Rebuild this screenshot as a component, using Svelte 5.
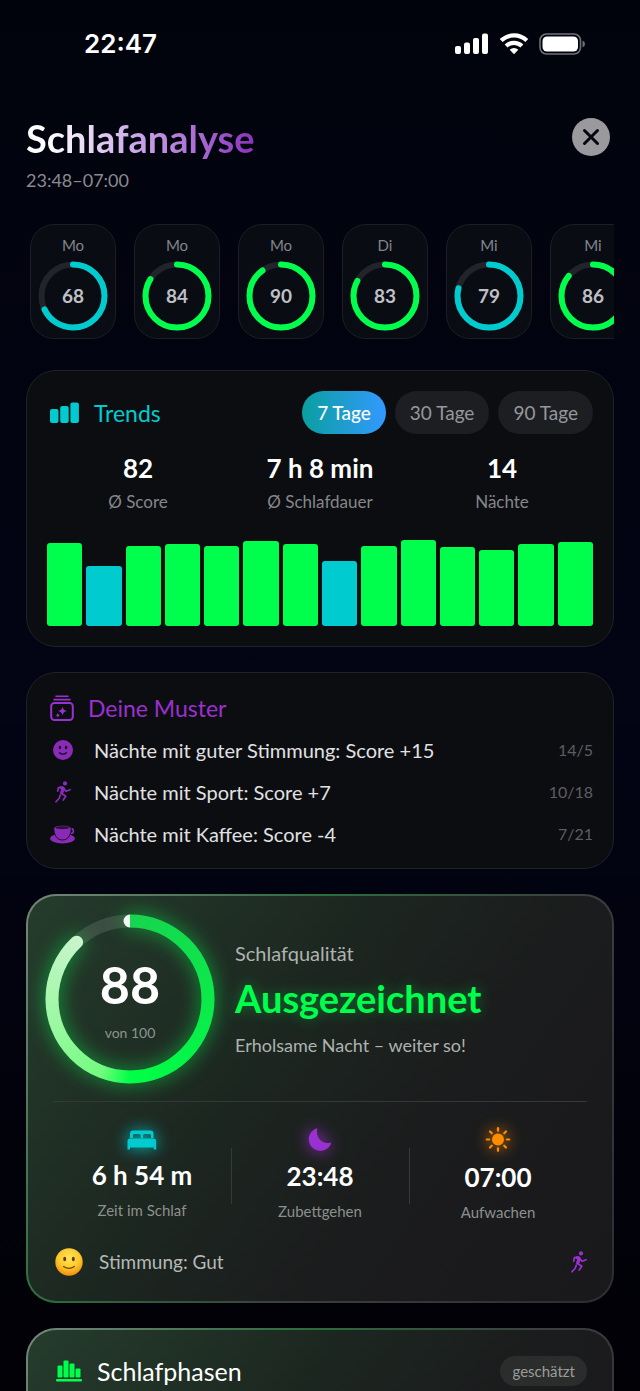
<script lang="ts">
    type Night = { day: string, score: number };

    const nights: Night[] = [
        { day: 'Mo', score: 68 },
        { day: 'Mo', score: 84 },
        { day: 'Mo', score: 90 },
        { day: 'Di', score: 83 },
        { day: 'Mi', score: 79 },
        { day: 'Mi', score: 86 },
    ];
    const ranges = [7, 30, 90];
    const trend = [83, 60, 80, 82, 80, 85, 82, 65, 80, 86, 79, 76, 82, 84];
    const patterns = [
        { icon: 'smile', text: 'Nächte mit guter Stimmung: Score +15', count: '14/5' },
        { icon: 'run', text: 'Nächte mit Sport: Score +7', count: '10/18' },
        { icon: 'cup', text: 'Nächte mit Kaffee: Score -4', count: '7/21' },
    ];

    let range = 7;
</script>

{#snippet runner()}
    <svg class="runner" viewBox="0 0 16 22" aria-hidden="true">
        <circle cx="10" cy="2.4" r="2.1" fill="currentColor" />
        <g fill="none" stroke="currentColor" stroke-width="1.7" stroke-linecap="round" stroke-linejoin="round">
            <path d="M2.7 10.2 3.4 6.6 7.6 6.2" />
            <path d="M8.6 7.6 11 10.2 15.1 8.7" />
            <path d="M6.3 12.2 10.8 15.2 8.2 19" />
            <path d="M5.3 14 4.2 17.2 1 20.8" />
        </g>
        <path d="M6.2 6.8 8.2 7.2 6.7 11.9" fill="none" stroke="currentColor" stroke-width="3.2" stroke-linejoin="round" stroke-linecap="round" />
    </svg>
{/snippet}

<div class="screen">
    <div class="statusbar">
        <time>22:47</time>
        <div class="status-icons">
            <svg width="34" height="22" viewBox="0 0 34 22" fill="#fff" aria-hidden="true">
                <rect x="0" y="13" width="6" height="8" rx="2" />
                <rect x="9" y="9.5" width="6" height="11.5" rx="2" />
                <rect x="18" y="5" width="6" height="16" rx="2" />
                <rect x="27" y="0.5" width="6" height="20.5" rx="2" />
            </svg>
            <svg width="30" height="22" viewBox="0 0 30 22" fill="none" stroke="#fff" stroke-width="4.2" aria-hidden="true">
                <path d="M2.2 7.6A18.5 18.5 0 0 1 27.800 7.600" />
                <path d="M7.100 13A11.500 11.500 0 0 1 22.900 13" />
                <path d="M15 21.200 10.700 16.700A6.200 6.200 0 0 1 19.300 16.700Z" fill="#fff" stroke="none" />
            </svg>
            <svg width="47" height="22" viewBox="0 0 47 22" aria-hidden="true">
                <rect x="1" y="1" width="40.5" height="20" rx="6.5" fill="none" stroke="#6f7077" stroke-width="1.6" />
                <rect x="3.5" y="3.5" width="35.5" height="15" rx="4.5" fill="#fff" />
                <path d="M43.500 7.500q2.500.8 2.500 3.500t-2.500 3.500z" fill="#6f7077" />
            </svg>
        </div>
    </div>

    <header>
        <div>
            <h1>Schlafanalyse</h1>
            <p>23:48–07:00</p>
        </div>
        <button class="close" aria-label="Schließen">
            <svg width="20" height="20" viewBox="0 0 20 20" aria-hidden="true">
                <path d="M3.500 3.500 16.500 16.500M16.500 3.500 3.500 16.500" stroke="#05060f" stroke-width="3" stroke-linecap="round" />
            </svg>
        </button>
    </header>

    <main>
        <div class="nights">
            {#each nights as night}
                <button class="night" class:good={night.score >= 80}>
                    <span>{night.day}</span>
                    <span class="ring">
                        <svg viewBox="0 0 70 70" aria-hidden="true">
                            <circle class="track" cx="35" cy="35" r="31.5" />
                            <circle class="value" cx="35" cy="35" r="31.5" pathLength="100" stroke-dasharray="{night.score} 100" />
                        </svg>
                        <b>{night.score}</b>
                    </span>
                </button>
            {/each}
        </div>

        <section class="card trends">
            <div class="trends-head">
                <h2>
                    <svg width="29" height="22" viewBox="0 0 29 22" fill="currentColor" aria-hidden="true">
                        <rect x="0" y="7" width="8.5" height="14" rx="2" />
                        <rect x="10.2" y="4" width="8.5" height="17" rx="2" />
                        <rect x="20.4" y="0.5" width="8.5" height="20.5" rx="2" />
                    </svg>
                    Trends
                </h2>
                <div class="ranges">
                    {#each ranges as days}
                        <button class:active={range === days} aria-pressed={range === days} on:click={() => (range = days)}>{days} Tage</button>
                    {/each}
                </div>
            </div>
            <div class="averages">
                <div><strong>82</strong><span>Ø Score</span></div>
                <div><strong>7 h 8 min</strong><span>Ø Schlafdauer</span></div>
                <div><strong>14</strong><span>Nächte</span></div>
            </div>
            <div class="chart">
                {#each trend as score}
                    <div class="bar" class:good={score > 70} style="height: {score}%"></div>
                {/each}
            </div>
        </section>

        <section class="card patterns">
            <h2>
                <svg width="24" height="26" viewBox="0 0 24 26" fill="none" stroke="currentColor" stroke-linecap="round" aria-hidden="true">
                    <path d="M6 1.200h12M4 4.600h16" stroke-width="1.6" />
                    <rect x="1.2" y="8" width="21.6" height="17" rx="3.2" stroke-width="2" />
                    <path d="M12.500 11.500q.6 4 4.500 4.600-3.900.6-4.500 4.600-.6-4-4.500-4.600 3.900-.6 4.500-4.600z" fill="currentColor" stroke="none" />
                    <path d="M7.800 18q.3 2 2.200 2.300-1.900.3-2.200 2.300-.3-2-2.200-2.300 1.900-.3 2.200-2.300z" fill="currentColor" stroke="none" />
                </svg>
                Deine Muster
            </h2>
            <ul>
                {#each patterns as pattern}
                    <li>
                        <span class="icon">
                            {#if pattern.icon === 'smile'}
                                <svg width="20" height="20" viewBox="0 0 20 20" aria-hidden="true">
                                    <circle cx="10" cy="10" r="10" fill="currentColor" />
                                    <ellipse cx="6.9" cy="7.5" rx="1.2" ry="1.7" fill="#0c0d10" />
                                    <ellipse cx="13.1" cy="7.5" rx="1.2" ry="1.7" fill="#0c0d10" />
                                    <path d="M6.500 12.800q3.500 2.800 7 0" fill="none" stroke="#0c0d10" stroke-width="1.3" stroke-linecap="round" />
                                </svg>
                            {:else if pattern.icon === 'run'}
                                {@render runner()}
                            {:else}
                                <svg width="26" height="20" viewBox="0 0 26 20" aria-hidden="true">
                                    <ellipse cx="12.5" cy="14.5" rx="12.3" ry="4.9" fill="currentColor" />
                                    <ellipse cx="20.8" cy="7" rx="2.6" ry="2.4" fill="none" stroke="currentColor" stroke-width="1.6" />
                                    <path d="M3.800 4.200C3.800.2 21.200.2 21.200 4.200c0 6-2.700 11.800-8.700 11.800S3.800 10.200 3.800 4.200z" fill="currentColor" stroke="#0c0d10" stroke-width="0.9" />
                                    <ellipse cx="12.500" cy="3.700" rx="7" ry="1.600" fill="#2a1638" />
                                </svg>
                            {/if}
                        </span>
                        <span class="text">{pattern.text}</span>
                        <span class="count">{pattern.count}</span>
                    </li>
                {/each}
            </ul>
        </section>

        <section class="card glass score">
            <div class="score-head">
                <div class="score-ring">
                    <svg viewBox="0 0 170 170" aria-hidden="true">
                        <mask id="score-arc" maskUnits="userSpaceOnUse" x="0" y="0" width="170" height="170">
                            <circle cx="85" cy="85" r="78" pathLength="100" stroke-dasharray="88 100" transform="rotate(-90 85 85)" fill="none" stroke="#fff" stroke-width="13" stroke-linecap="round" />
                        </mask>
                        <circle cx="85" cy="85" r="78" fill="none" stroke="#fff" stroke-opacity="0.12" stroke-width="13" />
                    </svg>
                    <div class="glow"><div class="arc"></div></div>
                    <div class="score-value">
                        <strong>88</strong>
                        <span>von 100</span>
                    </div>
                </div>
                <div class="rating">
                    <span>Schlafqualität</span>
                    <h2>Ausgezeichnet</h2>
                    <p>Erholsame Nacht – weiter so!</p>
                </div>
            </div>

            <div class="times">
                <div class="sleep">
                    <svg width="30" height="20" viewBox="0 0 30 20" fill="currentColor" aria-hidden="true">
                        <path d="M3 8V3.500Q3 .5 6 .5H23.500Q26.500.5 26.500 3.500V8H24V5.600Q24 4 22.500 4H17.500Q16 4 16 5.600V8H13.700V5.600Q13.700 4 12.200 4H7.400Q5.900 4 5.900 5.600V8z" />
                        <path d="M.5 11.500Q.5 8.500 3.500 8.500H26.200Q29.200 8.500 29.200 11.500V19.500H26.800V17.500H3V19.500H.5z" />
                    </svg>
                    <strong>6 h 54 m</strong>
                    <span>Zeit im Schlaf</span>
                </div>
                <div class="bed">
                    <svg width="24" height="23" viewBox="0 0 24 23" fill="currentColor" aria-hidden="true">
                        <path d="M8.500.5Q9.500 0 9.200 1.200C7.500 9 13.500 16.500 22.200 14.700Q23.500 14.500 23 15.700C21 20.200 17 22.700 12.300 22.700 5.900 22.700.8 17.600.8 11.300.8 6.500 3.700 2.300 8.500.5z" />
                    </svg>
                    <strong>23:48</strong>
                    <span>Zubettgehen</span>
                </div>
                <div class="wake">
                    <svg width="26" height="25" viewBox="-13 -12.5 26 25" aria-hidden="true">
                        <circle r="6" fill="currentColor" />
                        <g stroke="currentColor" stroke-width="2.2" stroke-linecap="round">
                            {#each [0, 45, 90, 135, 180, 225, 270, 315] as angle}
                                <path d="M0-8.800V-11.300" transform="rotate({angle})" />
                            {/each}
                        </g>
                    </svg>
                    <strong>07:00</strong>
                    <span>Aufwachen</span>
                </div>
            </div>

            <div class="mood">
                <svg width="28" height="28" viewBox="0 0 28 28" aria-hidden="true">
                    <defs>
                        <radialGradient id="face" cx="0.5" cy="0.35" r="0.65">
                            <stop offset="0" stop-color="#ffe65a" />
                            <stop offset="0.6" stop-color="#fdc82c" />
                            <stop offset="1" stop-color="#f08c10" />
                        </radialGradient>
                    </defs>
                    <circle cx="14" cy="14" r="13.7" fill="url(#face)" />
                    <ellipse cx="9.7" cy="11" rx="1.5" ry="2.2" fill="#69380b" />
                    <ellipse cx="18.3" cy="11" rx="1.5" ry="2.2" fill="#69380b" />
                    <path d="M8.500 18.500q5.500 3.600 11 0" fill="none" stroke="#7a420c" stroke-width="1.2" stroke-linecap="round" />
                </svg>
                <span>Stimmung: Gut</span>
                {@render runner()}
            </div>
        </section>

        <section class="card glass phases">
            <h2>
                <svg width="26" height="22" viewBox="0 0 26 22" fill="currentColor" aria-hidden="true">
                    <rect x="1.5" y="5.5" width="5" height="12" rx="1" />
                    <rect x="7.5" y="0.5" width="5" height="17" rx="1" />
                    <rect x="13.5" y="3.5" width="5" height="14" rx="1" />
                    <rect x="19.5" y="8.5" width="5" height="9" rx="1" />
                    <rect x="0" y="19" width="26" height="2.5" rx="1" />
                </svg>
                Schlafphasen
            </h2>
            <span class="tag">geschätzt</span>
        </section>
    </main>
</div>

<style>
:global(body) {
    background: #01030c;
}
.screen {
    --green: #00ff4c;
    --cyan: #00cccf;
    --purple: #9b30d0;
    --muted: #85868b;
    box-sizing: border-box;
    height: 100vh;
    overflow: hidden auto;
    scrollbar-width: none;
    padding: 0 26px;
    background: linear-gradient(#01030c, #030414 50%, #010106);
    color: #fff;
    font-family: Lato, "Noto Sans", sans-serif;
    font-size: 20px;
    line-height: 24px;
}
h1, h2, p, ul {
    margin: 0;
    padding: 0;
}
button {
    font: inherit;
    border: none;
    cursor: pointer;
}
svg {
    display: block;
    flex-shrink: 0;
}

.statusbar {
    display: flex;
    justify-content: space-between;
    align-items: center;
    height: 88px;
    padding: 0 28px 0 58px;
}
.statusbar time {
    font-family: Inter, sans-serif;
    font-size: 26px;
    font-weight: 600;
}
.status-icons {
    display: flex;
    gap: 10px;
}

header {
    display: flex;
    justify-content: space-between;
    align-items: flex-start;
    padding: 30px 4px 32px 0;
}
h1 {
    width: fit-content;
    font-size: 38px;
    line-height: 40px;
    font-weight: 700;
    background: linear-gradient(90deg, #fff 10%, #c9a3e6 50%, #8a32bd);
    background-clip: text;
    color: transparent;
    padding-bottom: 4px;
}
header p {
    margin-top: 6px;
    font-size: 18px;
    color: #8a8b91;
}
.close {
    display: grid;
    place-items: center;
    width: 38px;
    height: 38px;
    padding: 0;
    border-radius: 50%;
    background: #9a9a9e;
}

main {
    display: flex;
    flex-direction: column;
    gap: 25px;
}
.nights {
    display: flex;
    gap: 18px;
    margin-bottom: 6px;
    padding-left: 4px;
    overflow: hidden;
}
.night {
    box-sizing: border-box;
    flex: 0 0 86px;
    display: flex;
    flex-direction: column;
    align-items: center;
    gap: 4px;
    padding: 8px 0 7px;
    border: 1px solid #1c1d25;
    border-radius: 24px;
    background: #0a0c14;
    color: #83848a;
    font-size: 15px;
    --ring: var(--cyan);
}
.night.good {
    --ring: var(--green);
}
.ring {
    display: grid;
    place-items: center;
}
.ring svg, .ring b {
    grid-area: 1 / 1;
}
.ring svg {
    width: 70px;
    transform: rotate(-90deg);
}
.ring circle {
    fill: none;
    stroke-width: 6;
}
.ring .track {
    stroke: #22242b;
}
.ring .value {
    stroke: var(--ring);
    stroke-linecap: round;
}
.ring b {
    font-size: 19px;
    color: #bfc0c5;
}

.card {
    padding: 20px;
    border: 1px solid #212227;
    border-radius: 30px;
    background: #0c0d10;
}
.card h2 {
    display: flex;
    align-items: center;
    gap: 15px;
    font-size: 23px;
    line-height: 30px;
    font-weight: 400;
}
.trends-head {
    display: flex;
    justify-content: space-between;
    align-items: center;
    padding-left: 3px;
}
.trends h2 {
    color: var(--cyan);
}
.ranges {
    display: flex;
    gap: 9px;
}
.ranges button {
    height: 43px;
    padding: 0 15px;
    border-radius: 22px;
    background: #1d1e22;
    color: #96979b;
    font-size: 19px;
}
.ranges button.active {
    background: linear-gradient(90deg, #0a9f9f, #3399ff);
    color: #fff;
    font-weight: 500;
}
.averages {
    display: grid;
    grid-template-columns: repeat(3, 1fr);
    margin-top: 19px;
}
.averages div {
    display: flex;
    flex-direction: column;
    align-items: center;
    gap: 7px;
}
.averages strong, .times strong {
    font-size: 26px;
    line-height: 30px;
    font-weight: 700;
}
.averages span {
    font-size: 17px;
    color: var(--muted);
}
.chart {
    display: flex;
    align-items: flex-end;
    gap: 4px;
    height: 100px;
    margin-top: 12px;
}
.bar {
    flex: 1;
    border-radius: 3px;
    background: var(--cyan);
}
.bar.good {
    background: var(--green);
}

.patterns {
    padding-bottom: 13px;
}
.patterns h2 {
    gap: 14px;
    padding-left: 3px;
    color: var(--purple);
}
.patterns ul {
    list-style: none;
    margin-top: 6px;
}
.patterns li {
    display: flex;
    align-items: center;
    gap: 18px;
    height: 42px;
    padding-left: 3px;
}
.patterns .icon {
    display: grid;
    place-items: center;
    width: 26px;
    color: #8a2bb8;
}
.patterns .text {
    flex: 1;
    color: #e1e1e3;
}
.patterns .count {
    font-size: 16px;
    color: #5d5e63;
}
.runner {
    width: 16px;
    height: 22px;
}

.glass {
    border: 2px solid transparent;
    background:
        linear-gradient(125deg, #253c2c, #1c2620 40%, #1b1c1d 65%, #19181b) padding-box,
        linear-gradient(125deg, #75857a, #2b6c3c 35%, #3c3d3f 65%, #2e2b33) border-box;
}
.score {
    padding: 18px 25px 25px;
}
.score-head {
    display: flex;
    align-items: center;
    gap: 20px;
    padding-bottom: 17px;
    margin-left: -8px;
}
.score-ring {
    display: grid;
    place-items: center;
    width: 170px;
    height: 170px;
}
.score-ring > * {
    grid-area: 1 / 1;
}
.score-ring svg {
    width: 170px;
}
.glow {
    filter: drop-shadow(0 0 10px #00ff4c90);
}
.arc {
    width: 170px;
    height: 170px;
    background: conic-gradient(#17d44f, #00ff46 50%, #74fb7f 56%, #9bf8a2 70%, #c6f5ca 88%, #f2faf3);
    mask: url(#score-arc);
}
.score-value {
    display: flex;
    flex-direction: column;
    align-items: center;
    gap: 7px;
}
.score-value strong {
    font-size: 52px;
    line-height: 60px;
}
.score-value span {
    font-size: 14px;
    color: #8b948e;
}
.rating {
    color: #afb3b0;
}
.rating h2 {
    margin: 14px 0 16px;
    font-size: 38px;
    line-height: 38px;
    font-weight: 700;
    color: var(--green);
    text-shadow: 0 0 14px #00ff4c60;
}
.rating p {
    font-size: 18px;
}
.times {
    display: grid;
    grid-template-columns: repeat(3, 1fr);
    align-items: center;
    border-top: 1px solid #333a36;
    padding: 25px 0 24px;
}
.times div {
    position: relative;
    display: flex;
    flex-direction: column;
    align-items: center;
}
.times div + div::before {
    content: "";
    position: absolute;
    left: 0;
    top: 50%;
    width: 1px;
    height: 56px;
    margin-top: -28px;
    background: #363a38;
}
.times svg {
    filter: drop-shadow(0 0 8px currentColor);
}
.times strong {
    margin: 10px 0 8px;
}
.times span {
    font-size: 15px;
    color: #8c908d;
}
.times .sleep svg {
    color: var(--cyan);
}
.times .bed svg {
    color: var(--purple);
}
.times .wake svg {
    color: #ff8c00;
}
.mood {
    display: flex;
    align-items: center;
    gap: 16px;
    padding-left: 2px;
    font-size: 19px;
    color: #b5b9b6;
}
.mood span {
    flex: 1;
}
.mood .runner {
    color: var(--purple);
}

.phases {
    display: flex;
    justify-content: space-between;
    align-items: flex-start;
    min-height: 260px;
    padding: 26px 25px;
}
.phases h2 {
    padding-left: 3px;
    font-size: 25px;
}
.phases h2 svg {
    color: var(--green);
}
.tag {
    padding: 3px 12px;
    border-radius: 15px;
    background: #2a2d2b;
    color: #9a9c9b;
    font-size: 15px;
}
</style>
